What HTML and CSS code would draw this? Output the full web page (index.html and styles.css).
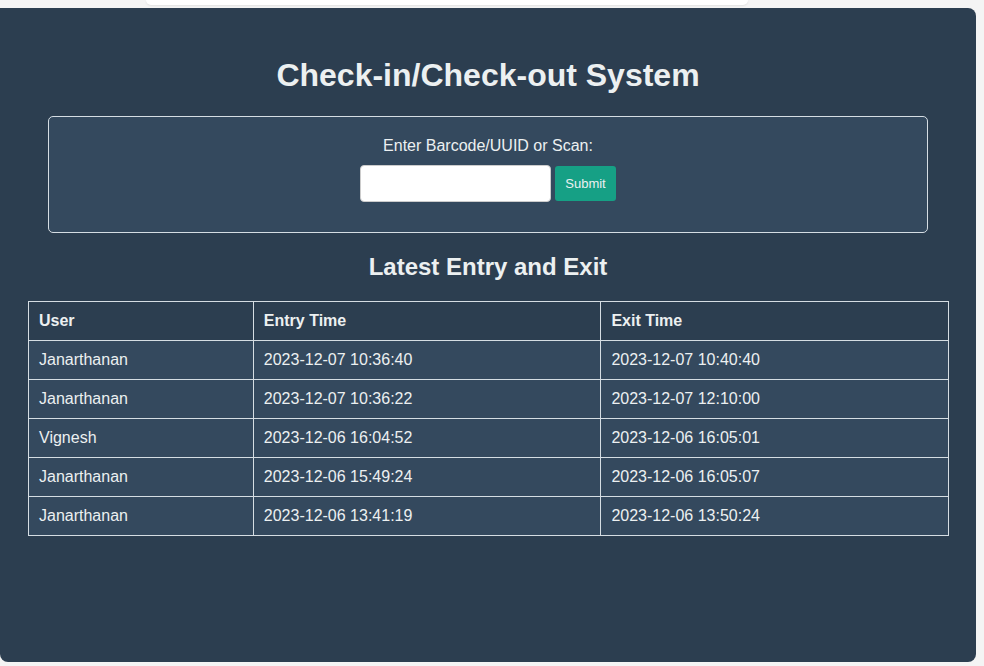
FILE: index.html
```html
<!DOCTYPE html>
<html>
<head>
<meta charset="utf-8">
<link rel="stylesheet" href="styles.css">
</head>
<body>
<div class="topcard"></div>
<div class="panel">
  <h1 class="title">Check-in/Check-out System</h1>
  <form class="scan-box" onsubmit="return false">
    <label class="scan-label" for="code">Enter Barcode/UUID or Scan:</label>
    <div class="scan-row">
      <input id="code" class="scan-input" type="text">
      <button class="scan-btn" type="submit">Submit</button>
    </div>
  </form>
  <h2 class="subtitle">Latest Entry and Exit</h2>
  <table class="log">
    <colgroup><col class="c1"><col class="c2"><col class="c3"></colgroup>
    <thead>
      <tr><th>User</th><th>Entry Time</th><th>Exit Time</th></tr>
    </thead>
    <tbody>
      <tr><td>Janarthanan</td><td>2023-12-07 10:36:40</td><td>2023-12-07 10:40:40</td></tr>
      <tr><td>Janarthanan</td><td>2023-12-07 10:36:22</td><td>2023-12-07 12:10:00</td></tr>
      <tr><td>Vignesh</td><td>2023-12-06 16:04:52</td><td>2023-12-06 16:05:01</td></tr>
      <tr><td>Janarthanan</td><td>2023-12-06 15:49:24</td><td>2023-12-06 16:05:07</td></tr>
      <tr><td>Janarthanan</td><td>2023-12-06 13:41:19</td><td>2023-12-06 13:50:24</td></tr>
    </tbody>
  </table>
</div>
</body>
</html>
```
FILE: styles.css
```css
html, body {
  margin: 0;
  padding: 0;
}
body {
  background: #f4f4f4;
  font-family: "Liberation Sans", Arial, sans-serif;
  color: #ecf0f1;
  width: 984px;
  height: 666px;
  overflow: hidden;
}
.topcard {
  width: 602px;
  height: 5px;
  margin: 0 0 3px 146px;
  background: #ffffff;
  border-radius: 0 0 8px 8px;
  box-shadow: 0 1px 2px rgba(0,0,0,0.08);
}
.panel {
  width: 976px;
  height: 654px;
  box-sizing: border-box;
  background: #2c3e50;
  border-radius: 0 8px 8px 8px;
  padding: 49px 28px 0 28px;
}
.title {
  margin: 0 0 22px;
  font-size: 32px;
  line-height: 37px;
  font-weight: bold;
  text-align: center;
  color: #ecf0f1;
}
.scan-box {
  margin: 0 20px;
  height: 117px;
  box-sizing: border-box;
  border: 1px solid #d5dde3;
  border-radius: 5px;
  background: #34495e;
  padding-top: 20px;
  display: flex;
  flex-direction: column;
  align-items: center;
}
.scan-label {
  font-size: 16px;
  line-height: 18px;
  color: #ecf0f1;
  margin-bottom: 10px;
}
.scan-row {
  display: flex;
  align-items: center;
  gap: 4px;
}
.scan-input {
  width: 191px;
  height: 37px;
  box-sizing: border-box;
  border: 1px solid #ccc;
  border-radius: 4px;
  background: #fff;
  margin: 0;
}
.scan-btn {
  width: 61px;
  height: 35px;
  border: none;
  border-radius: 3px;
  background: #16a085;
  color: #ecf0f1;
  font-family: "Liberation Sans", Arial, sans-serif;
  font-size: 13px;
  padding: 0;
  margin: 0;
}
.subtitle {
  margin: 20px 0 20px;
  font-size: 24px;
  line-height: 28px;
  font-weight: bold;
  text-align: center;
  color: #ecf0f1;
}
.log {
  width: 921px;
  border-collapse: collapse;
  font-size: 16px;
}
.c1 { width: 225px; }
.c2 { width: 348px; }
.c3 { width: 348px; }
.log th, .log td {
  border: 1px solid #d5dde3;
  height: 39px;
  box-sizing: border-box;
  padding: 0 10px;
  text-align: left;
  line-height: 18px;
  color: #ecf0f1;
}
.log th {
  background: #2c3e50;
  font-weight: bold;
}
.log td {
  background: #34495e;
}
```
